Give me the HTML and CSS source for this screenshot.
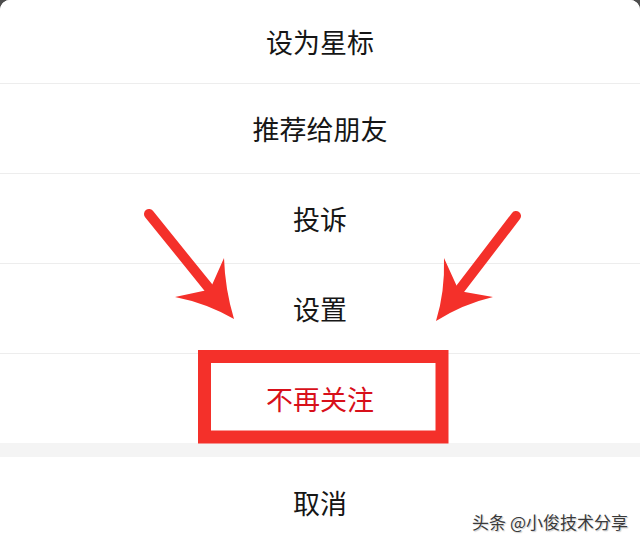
FILE: index.html
```html
<!DOCTYPE html>
<html lang="zh-CN">
<head>
    <meta charset="UTF-8">
    <meta name="viewport" content="width=device-width, initial-scale=1.0">
    <title>公众号操作菜单</title>
    <link rel="stylesheet" href="styles.css">
</head>
<body>
    <div class="sheet">
        <div class="menu">
            <div class="item item-first">设为星标</div>
            <div class="item">推荐给朋友</div>
            <div class="item">投诉</div>
            <div class="item">设置</div>
            <div class="item item-danger">不再关注</div>
        </div>
        <div class="gap"></div>
        <div class="item item-cancel">取消</div>
    </div>

    <!-- 标注：箭头和红框 -->
    <svg class="marks" width="640" height="547" viewBox="0 0 640 547">
        <g fill="#f4302a" stroke="none">
            <line x1="149" y1="214" x2="212" y2="292" stroke="#f4302a" stroke-width="10" stroke-linecap="round"/>
            <path d="M234 319 Q225 289 224 258 L210 289.5 L175 297 Q206 303 234 319 Z"/>
            <line x1="516" y1="216" x2="457" y2="293" stroke="#f4302a" stroke-width="10" stroke-linecap="round"/>
            <path d="M436 321 Q463 304 493 297 L459 291 L444 258 Q445 292 436 321 Z"/>
        </g>
        <rect x="204.5" y="356.5" width="237.5" height="80.5" fill="none" stroke="#f4302a" stroke-width="13"/>
    </svg>

    <div class="watermark">头条 @小俊技术分享</div>
</body>
</html>
```

FILE: styles.css
```css
* {
    margin: 0;
    padding: 0;
    box-sizing: border-box;
}

body {
    width: 640px;
    height: 547px;
    overflow: hidden;
    background: #4d4d4d;
    font-family: "Noto Sans CJK SC", "Noto Sans", sans-serif;
    color: #161616;
    position: relative;
}

.sheet {
    background: #f4f4f4;
    border-radius: 10px 10px 0 0;
    overflow: hidden;
    height: 547px;
    display: flex;
    flex-direction: column;
}

.menu {
    display: flex;
    flex-direction: column;
    gap: 1px;
    background: #ededed;
}

.item {
    height: 89px;
    background: #fff;
    display: flex;
    align-items: center;
    justify-content: center;
    font-size: 27px;
    letter-spacing: 0;
}

.item-first {
    height: 83px;
}

.item-danger {
    color: #d8101a;
}

.gap {
    height: 14px;
    background: #f4f4f4;
}

.item-cancel {
    flex: 1;
    padding-bottom: 0;
}

.marks {
    position: absolute;
    top: 0;
    left: 0;
    pointer-events: none;
}

.watermark {
    position: absolute;
    right: 12px;
    top: 509px;
    font-size: 17px;
    color: #3a3a3a;
    text-shadow: 0 0 2px #fff, 1px 1px 1px rgba(0, 0, 0, 0.25);
    white-space: nowrap;
}
```
